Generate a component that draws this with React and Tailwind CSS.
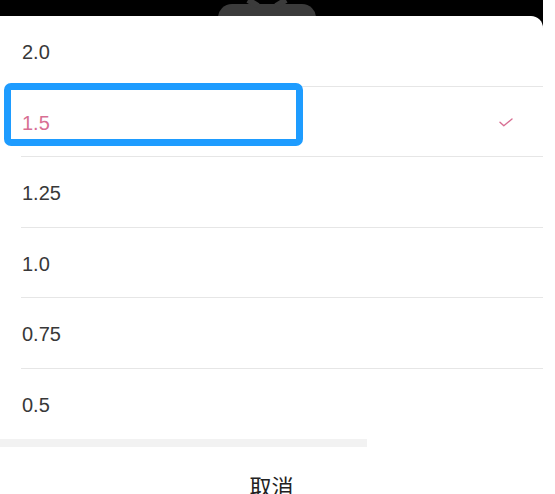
import React from 'react'

// each row's height in px, separator included
const speeds = [
  { label: '2.0', h: 'h-[70px]' },
  { label: '1.5', h: 'h-[70px]' },
  { label: '1.25', h: 'h-[71px]' },
  { label: '1.0', h: 'h-[70px]' },
  { label: '0.75', h: 'h-[71px]' },
  { label: '0.5', h: 'h-[71px]' },
]
const current = '1.5'

const Check = () => (
  <svg width="14" height="9" viewBox="0 0 14 9" fill="none">
    <path d="M1 4.2 L4.8 7.8 L13 1" stroke="#d86f93" strokeWidth="1.4" strokeLinecap="round" strokeLinejoin="round" />
  </svg>
)

const App = () => {
  return (
    <div className="relative w-[555px] h-[494px] overflow-hidden bg-white font-['Liberation_Sans','Noto_Sans_CJK_SC',sans-serif]">
      <div className="w-[543px] h-full bg-black pt-[16px] relative">
        {/* tv shape behind the sheet */}
        <svg className="absolute left-[218px] top-0" width="98" height="16" viewBox="0 0 98 16">
          <rect x="0" y="4" width="98" height="30" rx="14" fill="#3b3b3b" />
          <path d="M30 0 L40 6 M68 0 L58 6" stroke="#3b3b3b" strokeWidth="6" />
        </svg>

        <div className="relative h-full bg-white rounded-tr-[12px]">
          <ul>
            {speeds.map((s, i) => (
              <li key={s.label} className={i === 0 ? '' : 'pl-[21px]'}>
                <div
                  className={`flex items-center justify-between pr-[30px] ${s.h} ${
                    i === 0 ? 'pl-[22px] pt-px' : 'pl-px pt-[2px] border-t border-[#e6e6e6]'
                  }`}
                >
                  <span
                    className={`text-[20px] leading-none ${
                      s.label === current ? 'text-[#d86f93]' : 'text-[#383838]'
                    }`}
                  >
                    {s.label}
                  </span>
                  {s.label === current && <Check />}
                </div>
              </li>
            ))}
          </ul>

          <div className="w-[367px] h-[8px] bg-[#f2f2f2]" />

          <div className="pt-[27px] text-center text-[22px] leading-none text-[#222222] font-['Noto_Sans_CJK_SC',sans-serif]">
            取消
          </div>
        </div>
      </div>

      {/* highlight box around the selected speed */}
      <div className="absolute left-[4px] top-[83px] w-[299px] h-[63px] border-[7px] border-[#1e9cff] rounded-[7px]" />
    </div>
  )
}

export default App
